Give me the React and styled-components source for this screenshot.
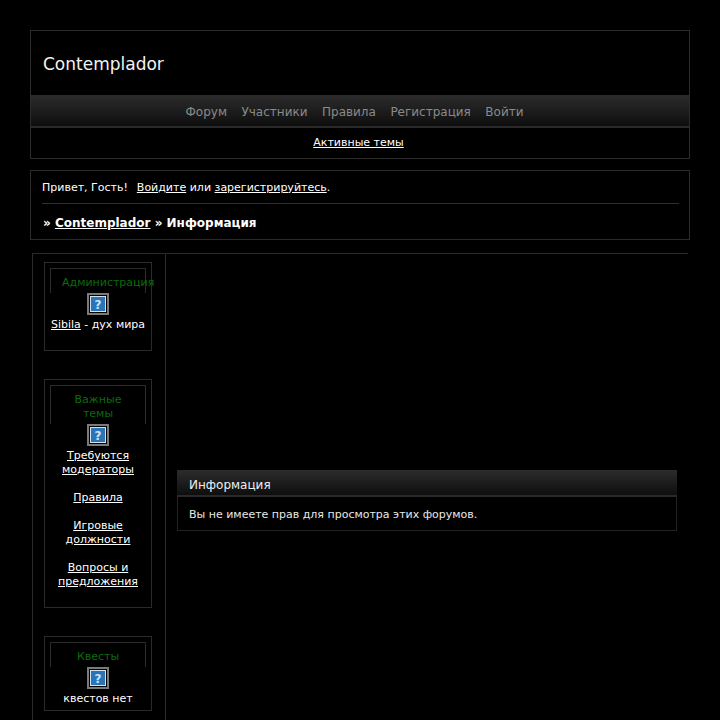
import styled, { createGlobalStyle } from "styled-components";

const GlobalStyle = createGlobalStyle`
  html, body {
    margin: 0;
    padding: 0;
    background: #000;
    color: #fff;
    font-family: "DejaVu Sans", Verdana, sans-serif;
    font-size: 11px;
    line-height: 14px;
  }
  a {
    color: #fff;
    text-decoration: underline;
  }
`;

const Wrap = styled.div`
  width: 660px;
  margin: 30px auto 0;
`;

const Header = styled.div`
  border: 1px solid #2b2b2b;
  height: 127px;
`;

const Title = styled.div`
  height: 64px;
  padding: 2px 0 0 12px;
  box-sizing: border-box;
  display: flex;
  align-items: center;
  font-size: 17px;
  color: #f2f2f2;
`;

const Nav = styled.div`
  height: 33px;
  display: flex;
  justify-content: center;
  align-items: center;
  gap: 14.5px;
  padding: 2px 11px 0 0;
  box-sizing: border-box;
  font-size: 12px;
  color: #8a8a8a;
  background: linear-gradient(#2c2c2c, #0e0e0e);
  border-bottom: 2px solid #2a2a2a;
`;

const SubNav = styled.div`
  height: 30px;
  display: flex;
  justify-content: center;
  align-items: center;
  padding-right: 3px;
`;

const Welcome = styled.div`
  margin-top: 11px;
  height: 68px;
  border: 1px solid #2b2b2b;
  padding: 0 10px 0 11px;
`;

const Greeting = styled.div`
  height: 33px;
  padding-top: 1px;
  box-sizing: border-box;
  display: flex;
  align-items: center;
  white-space: pre;
  border-bottom: 1px solid #2f2f2f;
`;

const SignIn = styled.a`
  margin-left: 9px;
`;

const Crumbs = styled.div`
  height: 34px;
  padding: 4px 0 0 1px;
  box-sizing: border-box;
  display: flex;
  align-items: center;
  white-space: pre;
  font-size: 12px;
  font-weight: bold;
`;

const Columns = styled.div`
  display: flex;
  margin: 13px 2px 0;
  border-top: 1px solid #2b2b2b;
`;

const Sidebar = styled.div`
  width: 134px;
  flex: none;
  border-left: 1px solid #2b2b2b;
  border-right: 1px solid #2b2b2b;
  padding: 8px 13px 40px 11px;
  box-sizing: border-box;
  display: flex;
  flex-direction: column;
  gap: 28px;
`;

const Block = styled.div`
  border: 1px solid #2b2b2b;
  padding: 5px 5px ${(p) => (p.$tall ? "18px" : "4px")};
  text-align: center;
`;

const BlockTitle = styled.div`
  border: 1px solid #2b2b2b;
  border-bottom: none;
  padding: 7px 11px 3px;
  color: #0b6b0b;
`;

const BlockIcon = styled.svg`
  display: block;
  width: 22px;
  height: 22px;
  margin: 0 auto 3px;
`;

const BlockBody = styled.div`
  display: flex;
  flex-direction: column;
  gap: 14px;
`;

const Content = styled.div`
  flex: 1;
  padding: 216px 11px 0 11px;
`;

const InfoHead = styled.div`
  height: 27px;
  box-sizing: border-box;
  display: flex;
  align-items: center;
  padding: 5px 0 0 12px;
  font-size: 12px;
  color: #eee;
  background: linear-gradient(#2c2c2c, #0e0e0e);
  border-bottom: 2px solid #2a2a2a;
`;

const InfoBody = styled.div`
  height: 34px;
  box-sizing: border-box;
  display: flex;
  align-items: center;
  padding: 2px 0 0 11px;
  border: 1px solid #222;
  border-top: none;
  color: #e8e8e8;
`;

const QuestionIcon = () => (
  <BlockIcon viewBox="0 0 22 22">
    <rect x="1" y="1" width="20" height="20" fill="#000" stroke="#7a7a7a" strokeWidth="2" />
    <rect x="3.5" y="3.5" width="15" height="15" fill="#2a75b8" stroke="#d5e2ee" />
    <text x="11" y="15.5" textAnchor="middle" fontSize="12" fontWeight="bold" fill="#cfe3f7" fontFamily="DejaVu Sans">?</text>
  </BlockIcon>
);

const App = () => {
  return (
    <>
      <GlobalStyle />
      <Wrap>
        <Header>
          <Title>Contemplador</Title>
          <Nav>
            <span>Форум</span>
            <span>Участники</span>
            <span>Правила</span>
            <span>Регистрация</span>
            <span>Войти</span>
          </Nav>
          <SubNav>
            <a href="#">Активные темы</a>
          </SubNav>
        </Header>

        <Welcome>
          <Greeting>
            Привет, Гость!<SignIn href="#">Войдите</SignIn> или <a href="#">зарегистрируйтесь</a>.
          </Greeting>
          <Crumbs>
            » <a href="#">Contemplador</a> » Информация
          </Crumbs>
        </Welcome>

        <Columns>
          <Sidebar>
            <Block $tall>
              <BlockTitle>Администрация</BlockTitle>
              <QuestionIcon />
              <BlockBody>
                <div><a href="#">Sibila</a> - дух мира</div>
              </BlockBody>
            </Block>
            <Block $tall>
              <BlockTitle>Важные темы</BlockTitle>
              <QuestionIcon />
              <BlockBody>
                <a href="#">Требуются модераторы</a>
                <a href="#">Правила</a>
                <a href="#">Игровые должности</a>
                <a href="#">Вопросы и предложения</a>
              </BlockBody>
            </Block>
            <Block>
              <BlockTitle>Квесты</BlockTitle>
              <QuestionIcon />
              <BlockBody>
                <div>квестов нет</div>
              </BlockBody>
            </Block>
          </Sidebar>
          <Content>
            <InfoHead>Информация</InfoHead>
            <InfoBody>Вы не имеете прав для просмотра этих форумов.</InfoBody>
          </Content>
        </Columns>
      </Wrap>
    </>
  );
};

export default App;
